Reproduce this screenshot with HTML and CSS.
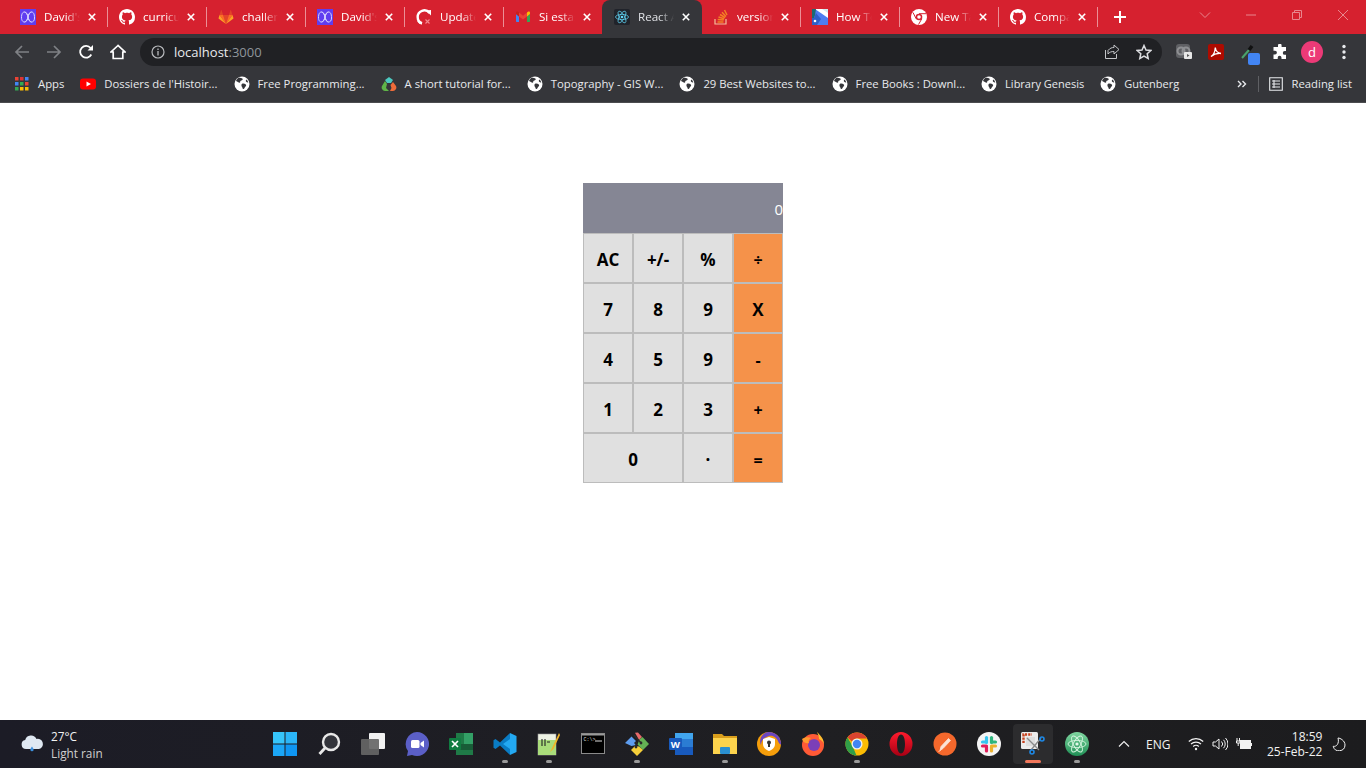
FILE: index.html
```html
<!DOCTYPE html>
<html lang="en">
<head>
<meta charset="utf-8">
<title>React App</title>
<link rel="stylesheet" href="styles.css">
</head>
<body>
<svg class="sprite" width="0" height="0">
  <defs>
    <linearGradient id="atomg" x1="0" y1="0" x2="0" y2="1"><stop offset="0" stop-color="#7fd6a0"/><stop offset="1" stop-color="#1f8f55"/></linearGradient>
    <linearGradient id="operag" x1="0" y1="0" x2="0" y2="1"><stop offset="0" stop-color="#ff1b2d"/><stop offset="1" stop-color="#a70014"/></linearGradient>
  </defs>
  <symbol id="gh" viewBox="0 0 16 16"><path fill="#fff" d="M8 0C3.58 0 0 3.58 0 8c0 3.54 2.29 6.53 5.47 7.59.4.07.55-.17.55-.38 0-.19-.01-.82-.01-1.49-2.01.37-2.53-.49-2.69-.94-.09-.23-.48-.94-.82-1.13-.28-.15-.68-.52-.01-.53.63-.01 1.08.58 1.23.82.72 1.21 1.87.87 2.33.66.07-.52.28-.87.51-1.07-1.78-.2-3.64-.89-3.64-3.95 0-.87.31-1.59.82-2.15-.08-.2-.36-1.02.08-2.12 0 0 .67-.21 2.2.82.64-.18 1.32-.27 2-.27.68 0 1.36.09 2 .27 1.53-1.04 2.2-.82 2.2-.82.44 1.1.16 1.92.08 2.12.51.56.82 1.27.82 2.15 0 3.07-1.87 3.75-3.65 3.95.29.25.54.73.54 1.48 0 1.07-.01 1.93-.01 2.2 0 .21.15.46.55.38A8.013 8.013 0 0016 8c0-4.42-3.58-8-8-8z"/></symbol>
  <symbol id="mm" viewBox="0 0 16 16"><rect width="16" height="16" fill="#5f3df0"/><g fill="none" stroke="#d6cfff" stroke-width="1"><path d="M1.500 9c0-5 1.500-6 3-6s3 3 3.500 5 2 5 3.500 5 3-1 3-4"/><path d="M1.500 8c0 4 1.500 5 3 5s3-3 3.500-5 2-5 3.500-5 3 1 3 6"/><path d="M4.500 3c1.500 0 3.500 2 3.500 5s-2 5-3.500 5M11.500 3C10 3 8 5 8 8s2 5 3.500 5"/></g></symbol>
  <symbol id="x" viewBox="0 0 10 10"><path d="M1 1l8 8M9 1l-8 8" stroke="#fff" stroke-width="2" fill="none"/></symbol>
  <symbol id="globe" viewBox="0 0 16 16"><circle cx="8" cy="8" r="7.500" fill="#fff"/><path fill="#35363a" d="M5 1.600c1 .5 2.800.4 3.600 1.200.6.6-.4 1.500-1.200 1.600-1 .2-1.400 1-1.200 1.700.2.800-1.300.6-2 .1C3.500 5.700 2.500 5.200 2 5c.6-1.500 1.700-2.700 3-3.400zM8.500 7.500c1.200-.3 2.500.2 3.300 1 .7.700.2 1.700-.5 2.300-.6.500-.7 1.500-1.300 2-.7.600-1.500.200-1.500-.7 0-.800-.6-1.200-.9-1.900-.4-1.100-.1-2.400.9-2.700zM12.500 3.500c.8.700 1.500 1.800 1.800 3-.8 0-1.800-.3-2.300-1-.4-.6-.2-1.500.5-2z"/></symbol>
</svg>

<div class="window">
  <header class="tabstrip">
    <div class="tab"><svg class="fav"><use href="#mm"/></svg><span class="tab-title">David's</span><svg class="tab-x"><use href="#x"/></svg></div>
    <div class="tab"><svg class="fav"><use href="#gh"/></svg><span class="tab-title">curriculum</span><svg class="tab-x"><use href="#x"/></svg></div>
    <div class="tab"><svg class="fav" viewBox="0 0 16 16"><path fill="#e24329" d="M8 15L5.100 6h5.800z"/><path fill="#fc6d26" d="M8 15L1.500 6h3.600zM8 15l6.500-9h-3.600z"/><path fill="#fca326" d="M1.500 6L.6 9c-.1.300 0 .6.200.8L8 15zM14.500 6l.9 3c.1.300 0 .6-.2.800L8 15z"/><path fill="#e24329" d="M1.500 6h3.600L3.500 1.200c-.1-.2-.4-.2-.5 0zM14.500 6h-3.600l1.600-4.800c.1-.2.4-.2.500 0z"/></svg><span class="tab-title">challenge</span><svg class="tab-x"><use href="#x"/></svg></div>
    <div class="tab"><svg class="fav"><use href="#mm"/></svg><span class="tab-title">David's</span><svg class="tab-x"><use href="#x"/></svg></div>
    <div class="tab"><svg class="fav" viewBox="0 0 16 16"><path fill="none" stroke="#fff" stroke-width="2.400" d="M6 14.200A6.600 6.600 0 0 1 6 1.800 6.600 6.600 0 0 1 13.500 4"/><path fill="#fff" d="M10 1.500l5-.5v5.500z"/><path fill="none" stroke="#fff" stroke-width="2" d="M2 12c1 1.500 2.500 2.500 4 2.500"/><path stroke="#f2888f" stroke-width="1.100" d="M9.500 10.500l4 4M13.500 10.500l-4 4"/></svg><span class="tab-title">Update</span><svg class="tab-x"><use href="#x"/></svg></div>
    <div class="tab"><svg class="fav" viewBox="0 0 16 16"><path fill="#4285f4" d="M1 5l3 2.500V13H1.800C1.300 13 1 12.700 1 12.200z"/><path fill="#34a853" d="M12 7.500L15 5v7.200c0 .5-.3.8-.8.8H12z"/><path fill="#ea4335" d="M4 7.500V3.500l4 3.200 4-3.200v4L8 10.500z"/><path fill="#fbbc04" d="M12 3.500l1.300-.9c.7-.5 1.700 0 1.700.9V5l-3 2.500z"/><path fill="#c5221f" d="M1 3.500c0-.9 1-1.400 1.700-.9L4 3.500v4L1 5z"/></svg><span class="tab-title">Si estas</span><svg class="tab-x"><use href="#x"/></svg></div>
    <div class="tab tab-active"><svg class="fav" viewBox="0 0 16 16"><rect width="16" height="16" rx="2" fill="#20232a"/><g fill="none" stroke="#61dafb" stroke-width=".7"><ellipse cx="8" cy="8" rx="6.500" ry="2.600"/><ellipse cx="8" cy="8" rx="6.500" ry="2.600" transform="rotate(60 8 8)"/><ellipse cx="8" cy="8" rx="6.500" ry="2.600" transform="rotate(120 8 8)"/></g><circle cx="8" cy="8" r="1.300" fill="#61dafb"/></svg><span class="tab-title">React App</span><svg class="tab-x"><use href="#x"/></svg></div>
    <div class="tab"><svg class="fav" viewBox="0 0 16 16"><path fill="none" stroke="#f3bd9a" stroke-width="1.200" d="M2 10v5h11v-5"/><path fill="none" stroke="#f48024" stroke-width="1.500" d="M4.500 13h6M4.700 10.500l6 .6M5.500 8l5.700 1.800M7 5.500l5.200 3.200M9 3.200l4 4.300M11.500 1l2.500 5"/></svg><span class="tab-title">version</span><svg class="tab-x"><use href="#x"/></svg></div>
    <div class="tab"><svg class="fav" viewBox="0 0 16 16"><rect width="16" height="16" fill="#4f7df0"/><path fill="#fff" d="M3 0h13v9z"/><path fill="#cfe9ef" d="M10 0h6v4z"/><path fill="#1d6a72" d="M0 0h4l-1 6-1 3H0z"/><path fill="#2f5fc8" d="M0 9h2l2-5 5 6-4 6H0z"/><circle cx="3" cy="12" r="1.300" fill="#fff"/></svg><span class="tab-title">How To</span><svg class="tab-x"><use href="#x"/></svg></div>
    <div class="tab"><svg class="fav" viewBox="0 0 16 16"><circle cx="8" cy="8" r="8" fill="#fff"/><circle cx="8" cy="8" r="3.300" fill="#d6212f"/><circle cx="8" cy="8" r="1.800" fill="#fff"/><path stroke="#d6212f" stroke-width="1" d="M8 4.700h7M5.200 9.800L2 3.500M10.800 9.800L7.500 15.500"/></svg><span class="tab-title">New Tab</span><svg class="tab-x"><use href="#x"/></svg></div>
    <div class="tab"><svg class="fav"><use href="#gh"/></svg><span class="tab-title">Compare</span><svg class="tab-x"><use href="#x"/></svg></div>
    <div class="new-tab"><svg class="plus" viewBox="0 0 12 12"><path d="M6 0v12M0 6h12" stroke="#fff" stroke-width="2"/></svg></div>
    <div class="win-controls">
      <svg class="win-ico" viewBox="0 0 12 12"><path d="M1 3.500l5 5 5-5" fill="none" stroke="#e8878e"/></svg>
      <svg class="win-ico" viewBox="0 0 12 12"><path d="M1 6h10" stroke="#e8878e"/></svg>
      <svg class="win-ico" viewBox="0 0 12 12"><path d="M1.500 3.500h7v7h-7zM3.500 3.500v-2h7v7h-2" fill="none" stroke="#e8878e"/></svg>
      <svg class="win-ico" viewBox="0 0 12 12"><path d="M1 1l10 10M11 1L1 11" stroke="#e8878e"/></svg>
    </div>
  </header>

  <nav class="toolbar">
    <svg class="nav-ico" viewBox="0 0 16 16"><path d="M15 8H2M8 2L2 8l6 6" fill="none" stroke="#7f8185" stroke-width="1.700"/></svg>
    <svg class="nav-ico" viewBox="0 0 16 16"><path d="M1 8h13M8 2l6 6-6 6" fill="none" stroke="#7f8185" stroke-width="1.700"/></svg>
    <svg class="nav-ico" viewBox="0 0 16 16"><path d="M13.300 10.500A5.900 5.900 0 1 1 12.600 4" fill="none" stroke="#fff" stroke-width="1.800"/><path fill="#fff" d="M9.500 6.500H15V1z"/></svg>
    <svg class="nav-ico" viewBox="0 0 16 16"><path d="M8 1.500L1 8h2.200v6.500h9.600V8H15z" fill="none" stroke="#fff" stroke-width="1.700"/></svg>
    <div class="omnibox">
      <svg class="info" viewBox="0 0 14 14"><circle cx="7" cy="7" r="6" fill="none" stroke="#b8babd" stroke-width="1.200"/><path d="M7 6v4.500M7 3.500v1.500" stroke="#b8babd" stroke-width="1.300"/></svg>
      <span class="url">localhost<span class="url-dim">:3000</span></span>
      <span class="spacer"></span>
      <svg class="omni-ico" viewBox="0 0 16 16"><path d="M4 7v-.5C6 4 8 3.500 10 3.500V1l5 4.500-5 4.500V7.500c-2.500 0-4.500.5-6 2.500zM12.500 10v4.500H1.500V6" fill="none" stroke="#c4c6c9" stroke-width="1"/></svg>
      <svg class="omni-ico" viewBox="0 0 16 16"><path d="M8 1.500l2 4.500 4.800.5-3.600 3.200 1 4.800L8 12.100l-4.200 2.400 1-4.800L1.200 6.500 6 6z" fill="none" stroke="#dcdde0" stroke-width="1.500"/></svg>
    </div>
    <div class="ext-row">
      <svg class="ext" viewBox="0 0 16 16"><rect width="14" height="14" rx="3" fill="#5f6064"/><circle cx="5" cy="7" r="3.500" fill="none" stroke="#8f9093" stroke-width="2"/><circle cx="10" cy="7" r="3.500" fill="none" stroke="#8f9093" stroke-width="2"/><rect x="8" y="8" width="8" height="7" rx="1" fill="#e8e8e8"/><path d="M11 10l2.500 1.500L11 13z" fill="#555"/></svg>
      <svg class="ext" viewBox="0 0 16 16"><rect width="16" height="16" rx="2" fill="#ad0b00"/><path d="M3 12.500c2-1 4-5 4.300-9 .3 3 2.500 5.500 5.700 6-3-.3-7 .5-10 3z" fill="none" stroke="#fff" stroke-width="1.300"/></svg>
      <div class="dropper"><svg class="ext" viewBox="0 0 16 16"><path d="M2 14l7-8" stroke="#4aa36c" stroke-width="2"/><path d="M9 6l3-4" stroke="#111" stroke-width="3.500"/></svg><span class="dropper-chip"></span></div>
      <svg class="ext" viewBox="0 0 16 16"><path fill="#fff" d="M6 1.500a1.800 1.800 0 0 1 3.600 0V3H14v4h-1.300a1.900 1.900 0 0 0 0 3.800H14V15H9.500v-1.300a1.900 1.900 0 0 0-3.800 0V15H1.500v-4.500H3a1.900 1.900 0 0 0 0-3.800H1.500V3H6z"/></svg>
      <span class="avatar">d</span>
      <svg class="ext" viewBox="0 0 16 16"><g fill="#e8eaed"><circle cx="8" cy="2.500" r="1.700"/><circle cx="8" cy="8" r="1.700"/><circle cx="8" cy="13.500" r="1.700"/></g></svg>
    </div>
  </nav>

  <nav class="bookmarks">
    <div class="bm bm-apps"><svg class="fav" viewBox="0 0 14 14"><rect width="3.500" height="3.500" fill="#ea4335"/><rect x="5" width="3.500" height="3.500" fill="#d33"/><rect x="10" width="3.500" height="3.500" fill="#4285f4"/><rect y="5" width="3.500" height="3.500" fill="#4285f4"/><rect x="5" y="5" width="3.500" height="3.500" fill="#34a853"/><rect x="10" y="5" width="3.500" height="3.500" fill="#ea4335"/><rect y="10" width="3.500" height="3.500" fill="#34a853"/><rect x="5" y="10" width="3.500" height="3.500" fill="#fbbc04"/><rect x="10" y="10" width="3.500" height="3.500" fill="#fbbc04"/></svg><span>Apps</span></div>
    <div class="bm"><svg class="fav" viewBox="0 0 16 16"><rect y="2.500" width="16" height="11" rx="3" fill="#f00"/><path d="M6.500 5.500L11 8l-4.500 2.500z" fill="#fff"/></svg><span>Dossiers de l'Histoir...</span></div>
    <div class="bm"><svg class="fav"><use href="#globe"/></svg><span>Free Programming...</span></div>
    <div class="bm"><svg class="fav" viewBox="0 0 16 16"><path d="M8 1l4 3-2 3H6L4 4z" fill="#4cc9c0"/><path d="M4 5l2 3-1 4 3 3H4a3.500 3.500 0 0 1-3-5z" fill="#5fb548"/><path d="M12 6l3 4a3.500 3.500 0 0 1-3 5H9l1.500-3-1-3z" fill="#ef6c3a"/></svg><span>A short tutorial for...</span></div>
    <div class="bm"><svg class="fav"><use href="#globe"/></svg><span>Topography - GIS W...</span></div>
    <div class="bm"><svg class="fav"><use href="#globe"/></svg><span>29 Best Websites to...</span></div>
    <div class="bm"><svg class="fav"><use href="#globe"/></svg><span>Free Books : Downl...</span></div>
    <div class="bm bm-tight"><svg class="fav"><use href="#globe"/></svg><span>Library Genesis</span></div>
    <div class="bm bm-tight"><svg class="fav"><use href="#globe"/></svg><span>Gutenberg</span></div>
    <span class="spacer"></span>
    <svg class="chev" viewBox="0 0 10 8"><path d="M1 1l3 3-3 3M5.500 1l3 3-3 3" fill="none" stroke="#e8eaed" stroke-width="1.400"/></svg>
    <span class="bm-sep"></span>
    <div class="bm bm-read"><svg class="list-ico" viewBox="0 0 14 14"><path d="M.7.700h12.600v12.600H.7zM3 4h8M3 7h8M3 10h8M5 3v8" fill="none" stroke="#e8eaed" stroke-width="1.100"/></svg><span>Reading list</span></div>
  </nav>

  <main class="page">
    <section class="calc">
      <div class="display">0</div>
      <button class="key">AC</button><button class="key">+/-</button><button class="key">%</button><button class="key op sym">÷</button>
      <button class="key">7</button><button class="key">8</button><button class="key">9</button><button class="key op">X</button>
      <button class="key">4</button><button class="key">5</button><button class="key">9</button><button class="key op sym">-</button>
      <button class="key">1</button><button class="key">2</button><button class="key">3</button><button class="key op sym">+</button>
      <button class="key wide">0</button><button class="key">·</button><button class="key op sym">=</button>
    </section>
  </main>

  <footer class="taskbar">
    <div class="weather">
      <svg class="cloud" viewBox="0 0 24 18"><path fill="#dfe8f2" d="M6 14a4.500 4.500 0 0 1-.8-8.900A6 6 0 0 1 16.500 4 4.800 4.800 0 0 1 19 14z"/><path fill="#3d8fdc" d="M12 11.500c1 1.500 1.600 2.300 1.600 3.200a1.600 1.600 0 0 1-3.200 0c0-.9.600-1.700 1.600-3.200z"/></svg>
      <div class="weather-text"><span>27°C</span><span class="weather-sub">Light rain</span></div>
    </div>
    <div class="apps">
      <div class="app"><svg class="app-ico" viewBox="0 0 24 24"><rect width="11.500" height="11.500" fill="#36c5fa"/><rect x="12.500" width="11.500" height="11.500" fill="#2bb6f8"/><rect y="12.500" width="11.500" height="11.500" fill="#1ba6f6"/><rect x="12.500" y="12.500" width="11.500" height="11.500" fill="#0f96f2"/></svg></div>
      <div class="app"><svg class="app-ico" viewBox="0 0 24 24"><circle cx="14" cy="10" r="8" fill="#33343b" stroke="#e8e8e8" stroke-width="2.400"/><path d="M8 16l-5.500 6" stroke="#e8e8e8" stroke-width="2.800"/></svg></div>
      <div class="app"><svg class="app-ico" viewBox="0 0 24 24"><rect x="8" y="1" width="16" height="16" rx="1" fill="#f2f2f2"/><rect x="0" y="7" width="18" height="16" rx="1" fill="#666" fill-opacity=".92"/></svg></div>
      <div class="app"><svg class="app-ico" viewBox="0 0 24 24"><path d="M12 0a12 12 0 1 1-5 22.900L2 24l1-5A12 12 0 0 1 12 0z" fill="#5b5fc7"/><rect x="6" y="8" width="8.500" height="8" rx="1.500" fill="#fff"/><path d="M15.500 11l3.500-2.500v7L15.500 13z" fill="#fff"/></svg></div>
      <div class="app"><svg class="app-ico" viewBox="0 0 24 24"><rect x="7" y="1" width="17" height="22" fill="#1f7a47"/><rect x="15" y="1" width="9" height="11" fill="#33a066"/><rect x="7" y="12" width="17" height="6" fill="#185c37"/><rect y="6" width="12" height="12" rx="1" fill="#107c41"/><path d="M3 9l6 6M9 9l-6 6" stroke="#fff" stroke-width="1.700"/></svg></div>
      <div class="app"><svg class="app-ico" viewBox="0 0 24 24"><path fill="#0a7cc4" d="M17 1L7 10.500 2.500 7 .5 8.200v7.600L2.500 17 7 13.500 17 23z"/><path fill="#23a9f2" d="M17 1l6.500 3v16L17 23zM17 7l-7 5 7 5z"/></svg><i class="dot"></i></div>
      <div class="app"><svg class="app-ico" viewBox="0 0 24 24"><rect x="1" y="2" width="18" height="21" fill="#eef3e4" stroke="#9a9a9a" stroke-width=".6"/><rect x="1" y="8" width="18" height="15" fill="#a9dc7a"/><path d="M5 7v7M8 7v7M10 10h3" stroke="#222" stroke-width="1.100"/><path d="M22 1l-7 15-2 4 3.500-3L23 3z" fill="#f0b429"/></svg><i class="dot"></i></div>
      <div class="app"><svg class="app-ico" viewBox="0 0 24 24"><rect x=".5" y="1.500" width="23" height="20" fill="#000" stroke="#8a8a8a"/><rect x="1" y="2" width="22" height="1.500" fill="#9a9a9a"/><text x="2.500" y="8.500" class="cmd-text">C:\&gt;</text><path d="M14 9h7" stroke="#ddd"/></svg></div>
      <div class="app"><svg class="app-ico" viewBox="0 0 24 24"><path d="M10 .8l3-.3 4 4.500-3 3z" fill="#e86a6a"/><path d="M0 12l6.500-6.500 4.500 4.500-2 2 2 2-4.500 1z" fill="#5e9df0" transform="translate(0 -1)"/><path d="M14.500 7.500l3-2.500 6.500 7-6 6-5.500-5.500z" fill="#64b254"/><path d="M6 18l4-4 4 .5 4 3.500-6 6z" fill="#f5cf3a"/><path d="M9 3l7.500 8.500M11 10v4.500" stroke="#2b2b2b" stroke-width="1.300"/><circle cx="11" cy="15" r="1.400" fill="#2b2b2b"/><circle cx="16" cy="11" r="1.400" fill="#2b2b2b"/></svg><i class="dot"></i></div>
      <div class="app"><svg class="app-ico" viewBox="0 0 24 24"><rect x="6" y="1" width="18" height="22" rx="1" fill="#2b7cd3"/><rect x="6" y="1" width="18" height="6" fill="#41a5ee"/><rect x="6" y="15" width="18" height="8" fill="#185abd"/><rect y="6" width="13" height="12" rx="1" fill="#185abd"/><text x="1.800" y="15.500" class="word-w">W</text></svg></div>
      <div class="app"><svg class="app-ico" viewBox="0 0 24 24"><path d="M0 2h9l2 2h13v4H0z" fill="#d99e1c"/><rect y="6" width="24" height="16" fill="#fcd34d"/><rect x="7" y="15" width="10" height="7" rx="1" fill="#2a8fd0"/></svg><i class="dot"></i></div>
      <div class="app"><svg class="app-ico" viewBox="0 0 24 24"><circle cx="12" cy="12" r="12" fill="#f59e0b"/><path d="M12 0a12 12 0 0 1 12 12c0 1-2 0-3-3C19 4 14 3 12 4 8 5 4 8 4 13c-3-6 2-13 8-13z" fill="#6b46c1"/><path d="M12 5l6 2v5c0 3.500-3 6-6 7-3-1-6-3.500-6-7V7z" fill="#fff"/><circle cx="12" cy="10.500" r="2" fill="#333"/><path d="M11 11h2v4h-2z" fill="#333"/></svg></div>
      <div class="app"><svg class="app-ico" viewBox="0 0 24 24"><circle cx="12" cy="13" r="11" fill="#ff5a36"/><path d="M16 0c2 2 7 6 7 13 0-3-3-5-5-6 0-2-1-5-2-7z" fill="#ffbd2e"/><circle cx="13" cy="13" r="6" fill="#7b3fb8"/><path d="M1 7c3-2 6-2 9-1-2 1-3 3-2 5-2 1-6 0-7-4z" fill="#ff9a2e"/></svg></div>
      <div class="app"><svg class="app-ico" viewBox="0 0 24 24"><circle cx="12" cy="12" r="11.500" fill="#fbbc04"/><path d="M12 .5A11.500 11.500 0 0 1 22 6.500H12a5.500 5.500 0 0 0-5 3L2.500 5.500A11.500 11.500 0 0 1 12 .5z" fill="#d9432f"/><path d="M2.500 5.500L7.500 14l4 9.500A11.500 11.500 0 0 1 2.500 5.500z" fill="#2f9e48"/><circle cx="12" cy="12" r="5.500" fill="#f1f1f1"/><circle cx="12" cy="12" r="4.200" fill="#4285f4"/></svg><i class="dot"></i></div>
      <div class="app"><svg class="app-ico" viewBox="0 0 24 24"><path fill="url(#operag)" fill-rule="evenodd" d="M12 0a11.500 12 0 1 1 0 24 11.500 12 0 0 1 0-24zm0 2.500C9.500 2.500 8 6.500 8 12s1.500 9.500 4 9.500 4-4 4-9.500-1.500-9.500-4-9.500z"/></svg></div>
      <div class="app"><svg class="app-ico" viewBox="0 0 24 24"><circle cx="12" cy="12" r="11.500" fill="#f4682c"/><path d="M7 18.500l1-4 7.500-8 2 2-7.500 8zM5.500 20l2-2" fill="#fbe3d6" stroke="#fbe3d6" stroke-width=".8"/></svg></div>
      <div class="app"><svg class="app-ico" viewBox="0 0 24 24"><circle cx="12" cy="12" r="12" fill="#f4f4f4"/><g stroke-width="3.200" stroke-linecap="round"><path d="M9.500 5.500v5" stroke="#36c5f0"/><path d="M5.500 10h3" stroke="#36c5f0"/><path d="M14.500 5.500v5" stroke="#2eb67d"/><path d="M15.500 10h3" stroke="#2eb67d"/><path d="M14.500 14h4" stroke="#ecb22e"/><path d="M14.500 15v4" stroke="#ecb22e"/><path d="M5.500 14h4" stroke="#e01e5a"/><path d="M9.500 15v4" stroke="#e01e5a"/></g></svg></div>
      <div class="app app-active"><svg class="app-ico" viewBox="0 0 24 24"><rect x="0" y="0" width="17" height="17" rx="1.500" fill="#ececec"/><path d="M2.500 11V2.500H11" fill="none" stroke="#c8401c" stroke-width="2.400" stroke-dasharray="2.200 1.100"/><path d="M5 5h9v9H5z" fill="#dedede"/><path d="M6 6l12 12M20 6L10 18" stroke="#8a8a8a" stroke-width="1.400"/><circle cx="21" cy="7" r="2" fill="none" stroke="#1e88e5" stroke-width="1.600"/><circle cx="11" cy="20" r="2" fill="none" stroke="#1e88e5" stroke-width="1.600"/></svg><i class="dot dot-active"></i></div>
      <div class="app"><svg class="app-ico" viewBox="0 0 24 24"><circle cx="12" cy="12" r="12" fill="url(#atomg)"/><g fill="none" stroke="#d6f5e0" stroke-width=".9"><ellipse cx="12" cy="12" rx="9" ry="3.600" transform="rotate(60 12 12)"/><ellipse cx="12" cy="12" rx="9" ry="3.600" transform="rotate(120 12 12)"/><ellipse cx="12" cy="12" rx="9" ry="3.600"/></g><circle cx="12" cy="12" r="1.600" fill="#e3f8ea"/></svg><i class="dot"></i></div>
    </div>
    <div class="tray">
      <svg class="tray-caret" viewBox="0 0 12 8"><path d="M1 6.500l5-5 5 5" fill="none" stroke="#eee" stroke-width="1.200"/></svg>
      <span class="lang">ENG</span>
      <svg class="tray-ico" viewBox="0 0 16 14"><g fill="none" stroke="#f2f2f2" stroke-width="1.200"><path d="M.8 4.500a10.500 10.500 0 0 1 14.400 0M3 7a7.400 7.400 0 0 1 10 0M5.200 9.500a4 4 0 0 1 5.600 0"/></g><circle cx="8" cy="12" r="1.200" fill="#f2f2f2"/></svg>
      <svg class="tray-ico" viewBox="0 0 16 14"><path d="M1 5v4h2.500L7 12V2L3.500 5zM9.500 4.500a3.500 3.500 0 0 1 0 5M11.500 2.800a6 6 0 0 1 0 8.400M13.500 1a8.500 8.500 0 0 1 0 12" fill="none" stroke="#f2f2f2"/></svg>
      <svg class="tray-ico" viewBox="0 0 16 14"><rect x="4.500" y="3.500" width="10" height="8" fill="#f2f2f2" stroke="#f2f2f2"/><rect x="15" y="6" width="1" height="3" fill="#f2f2f2"/><path d="M1 1v3M3.500 1v3M.5 4h3.500v2H.5zM2.200 6v3" stroke="#f2f2f2" fill="none"/></svg>
      <div class="clock"><span>18:59</span><span>25-Feb-22</span></div>
      <svg class="moon" viewBox="0 0 14 14"><path d="M6 1c2 0 7 2.500 7 7a6 6 0 0 1-11.800 1.300C4.500 10 7.500 6.500 6 1z" fill="none" stroke="#f2f2f2" stroke-width="1"/></svg>
    </div>
  </footer>
</div>
</body>
</html>
```
FILE: styles.css
```css
* { box-sizing: border-box; }
html, body { margin: 0; height: 100%; }
body { font-family: "Open Sans", "Noto Sans", sans-serif; font-size: 12px; color: #fff; background: #fff; overflow: hidden; }
.sprite { position: absolute; }
.window { display: flex; flex-direction: column; height: 768px; width: 1366px; }
.spacer { flex: 1; }

/* tab strip */
.tabstrip { height: 34px; background: #d6212f; display: flex; padding-left: 9px; flex: none; }
.tab { width: 99px; height: 34px; display: flex; align-items: center; padding: 0 12px 0 11px; flex: none; background: linear-gradient(#eb8f96, #eb8f96) right 7px / 1px 20px no-repeat; }
.tab:has(+ .tab-active), .tab-active { background: none; }
.tab-active { background: #35363a; border-radius: 8px 8px 0 0; width: 100px; margin-left: -1px; padding-left: 12px; }
.fav { width: 16px; height: 16px; flex: none; }
.tab-title { margin-left: 8px; width: 36px; white-space: nowrap; overflow: hidden; color: #fff; font-size: 11.6px; line-height: 16px; -webkit-mask-image: linear-gradient(90deg, #000 60%, transparent); mask-image: linear-gradient(90deg, #000 60%, transparent); }
.tab-active .tab-title { color: #dfe1e5; }
.tab-x { width: 8px; height: 8px; margin-left: 8px; flex: none; }
.new-tab { width: 44px; display: flex; align-items: center; justify-content: center; flex: none; }
.plus { width: 12px; height: 12px; }
.win-controls { margin-left: auto; display: flex; align-items: flex-start; padding: 9px 17px 0 0; gap: 34px; }
.win-ico { width: 12px; height: 12px; }

/* toolbar */
.toolbar { height: 34px; background: #35363a; display: flex; align-items: center; padding: 1px 14px 0; flex: none; }
.nav-ico { width: 16px; height: 16px; margin-right: 16px; flex: none; }
.omnibox { width: 1022px; height: 28px; margin-left: -2px; background: #202124; border-radius: 14px; display: flex; align-items: center; padding: 0 10px 0 11px; flex: none; font-size: 13px; }
.info { width: 14px; height: 14px; flex: none; }
.url { margin-left: 9px; color: #e8eaed; }
.url-dim { color: #8f959b; }
.omni-ico { width: 16px; height: 16px; margin-left: 16px; }
.ext-row { display: flex; align-items: center; margin-left: 14px; gap: 16px; }
.ext { width: 16px; height: 16px; display: block; flex: none; }
.dropper { position: relative; width: 16px; height: 16px; }
.dropper-chip { position: absolute; left: 8px; top: 9px; width: 12px; height: 12px; background: #4285f4; border-radius: 2px; }
.avatar { width: 22px; height: 22px; margin: 0 -3px; border-radius: 50%; background: #ec3a77; display: flex; align-items: center; justify-content: center; font-size: 13px; color: #fff; }

/* bookmarks */
.bookmarks { height: 35px; background: #35363a; border-bottom: 1px solid #4b4c4f; display: flex; align-items: center; padding: 0 14px 3px 15px; flex: none; gap: 16px; font-size: 11.3px; }
.bm { display: flex; align-items: center; gap: 8px; color: #e8eaed; white-space: nowrap; flex: none; }
.bm-tight { font-size: 11px; }
.bm-apps .fav { width: 14px; height: 14px; margin-right: 1px; }
.chev { width: 10px; height: 8px; margin-right: -5px; }
.bm-sep { width: 1px; height: 16px; background: #5f6064; margin-right: -6px; }
.list-ico { width: 14px; height: 14px; margin-right: 1px; }

/* page */
.page { flex: 1; background: #fff; display: flex; justify-content: center; padding-top: 80px; min-height: 0; }
.calc { width: 200px; height: 300px; display: grid; grid-template-columns: repeat(4, 50px); grid-template-rows: repeat(6, 50px); }
.display { grid-column: 1 / -1; background: #858694; color: #fff; text-align: right; font-size: 15px; line-height: 53px; overflow: hidden; width: 200px; }
.key { appearance: none; margin: 0; padding: 2px 0 0; border: 1px solid #bcbcbc; border-radius: 0; background: #e0e0e0; color: #000; font: 700 17px "Open Sans", "Noto Sans", sans-serif; }
.op { background: #f5924a; }
.sym { font-size: 16px; padding-top: 4px; }
.wide { grid-column: span 2; }

/* taskbar */
.taskbar { height: 48px; background: linear-gradient(90deg, #1c1c26, #1f1f22 60%, #1c1c1e); display: flex; align-items: center; flex: none; }
.weather { width: 263px; display: flex; align-items: center; padding-left: 20px; gap: 7px; flex: none; }
.cloud { width: 24px; height: 18px; }
.weather-text { display: flex; flex-direction: column; line-height: 17px; font-size: 11.8px; color: #f2f2f2; padding-top: 1px; }
.weather-sub { color: #cfcfcf; }
.apps { display: flex; flex: none; }
.app { width: 44px; height: 40px; display: flex; align-items: center; justify-content: center; position: relative; border-radius: 4px; }
.app-active { background: #2c2c2e; margin: 0 2px; width: 40px; }
.app-ico { width: 24px; height: 24px; }
.word-w { font: 700 9.500px "Open Sans", sans-serif; fill: #fff; }
.cmd-text { font: 5px "Liberation Mono", monospace; fill: #ddd; }
.dot { position: absolute; left: 50%; bottom: 1px; width: 6px; height: 3px; margin-left: -3px; border-radius: 2px; background: #9a9a9a; }
.dot-active { width: 16px; margin-left: -8px; background: #f2785c; }
.tray { display: flex; align-items: center; margin-left: 19px; flex: none; }
.tray-caret { width: 12px; height: 8px; }
.lang { margin-left: 16px; margin-right: 18px; font-size: 12px; color: #f2f2f2; }
.tray-ico { width: 16px; height: 14px; margin-right: 8px; }
.clock { display: flex; flex-direction: column; align-items: flex-end; width: 60px; margin-left: 2px; line-height: 15px; font-size: 12px; color: #f2f2f2; }
.moon { width: 14px; height: 14px; margin-left: 10px; }
```
